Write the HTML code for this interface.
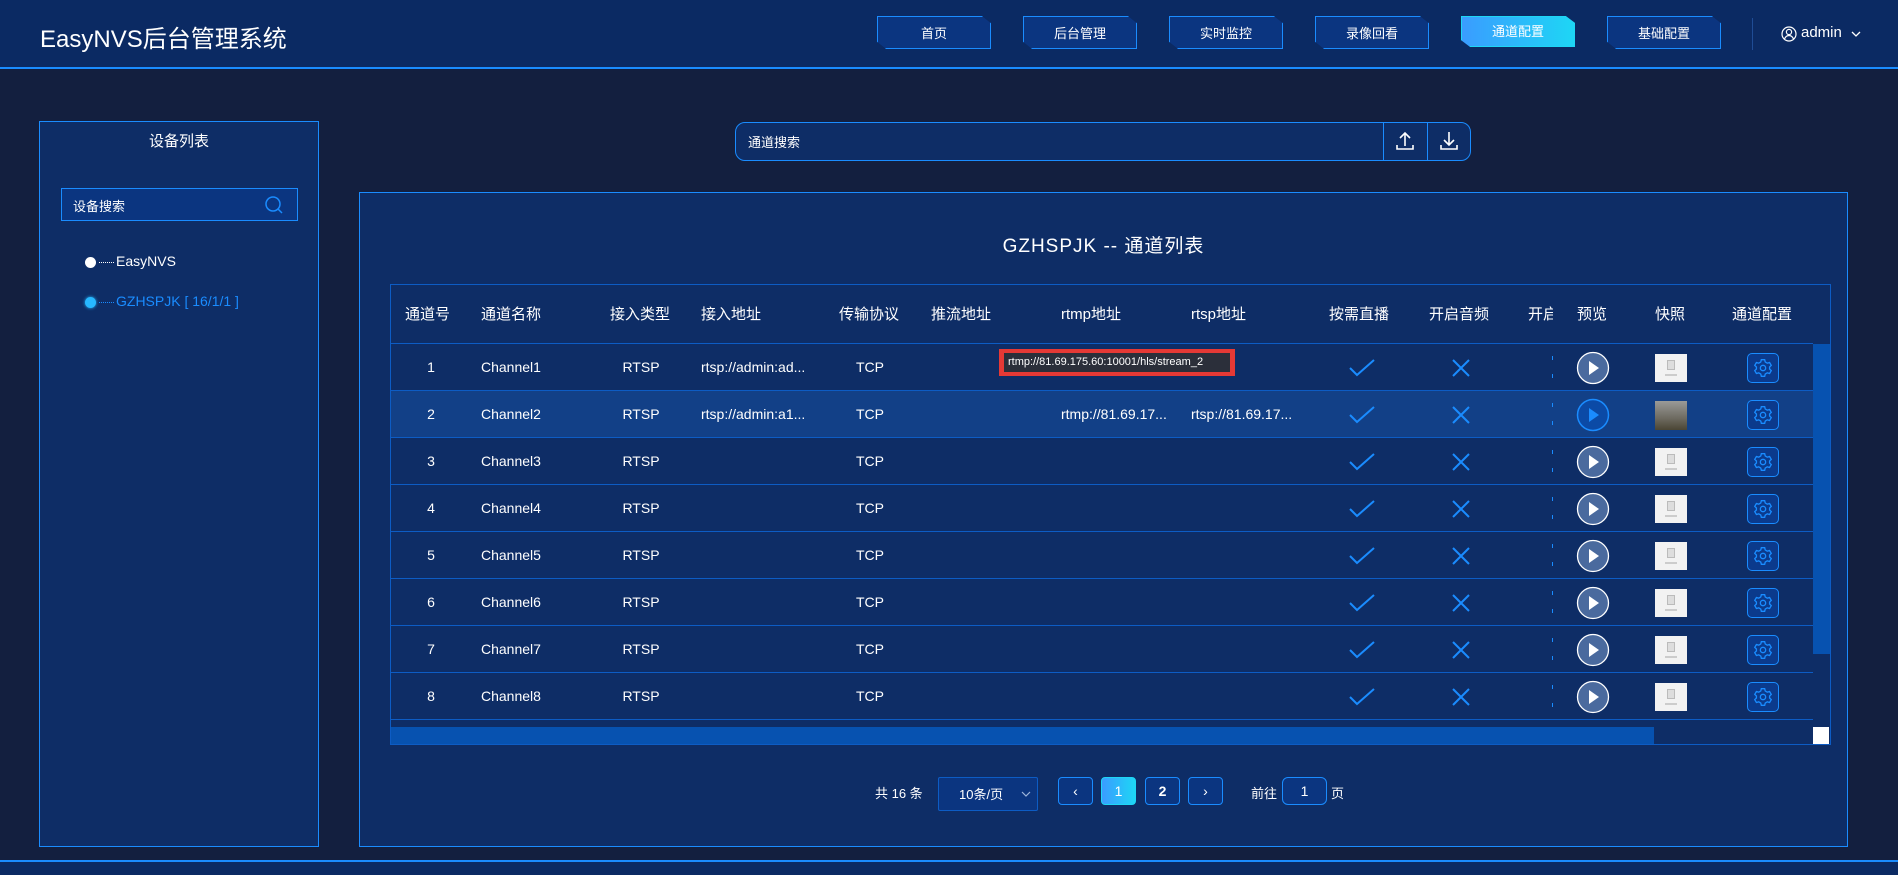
<!DOCTYPE html>
<html><head><meta charset="utf-8">
<style>
*{margin:0;padding:0;box-sizing:border-box}
body{width:1898px;height:875px;background:#131f3f;font-family:"Liberation Sans","Noto Sans CJK SC",sans-serif;color:#fff;position:relative;overflow:hidden;font-size:14px}
.abs{position:absolute}
.hdr{left:0;top:0;width:1898px;height:69px;background:#0b2a63;border-bottom:2px solid #1a8cff}
.title{left:40px;top:19px;font-size:24px;color:#fff}
.nav{top:16px;width:114px;height:33px;border:1px solid #1a8cff;background:#0b3580;font-size:13px;text-align:center;line-height:33px;clip-path:polygon(0 0,92% 0,100% 22%,100% 100%,8% 100%,0 78%)}
.nav.on{background:linear-gradient(90deg,#3a9cff,#1ed6f5);border-color:#1ed6f5;height:31px;line-height:30px}
.panel{background:#0e2d66;border:1px solid #1a8cff}
.cell{position:absolute;text-align:center;font-size:14px;line-height:47px}
.hd{position:absolute;font-size:15px;line-height:20px}
.row{position:absolute;left:391px;width:1422px;height:47px;border-bottom:1px solid #0d5cc4}
.pb{position:absolute;border:1px solid #1a8cff;background:#0b3580;border-radius:4px;text-align:center;font-size:14px}
</style></head><body>
<div class="abs hdr"></div>
<div class="abs title">EasyNVS后台管理系统</div>
<div class="abs nav" style="left:877px">首页</div>
<div class="abs nav" style="left:1023px">后台管理</div>
<div class="abs nav" style="left:1169px">实时监控</div>
<div class="abs nav" style="left:1315px">录像回看</div>
<div class="abs nav on" style="left:1461px">通道配置</div>
<div class="abs nav" style="left:1607px">基础配置</div>
<div class="abs" style="left:1752px;top:18px;width:1px;height:32px;background:#1f4c95"></div>
<svg class="abs" style="left:1781px;top:26px" width="16" height="16" viewBox="0 0 16 16" fill="none" stroke="#fff" stroke-width="1.2"><circle cx="8" cy="8" r="7"/><circle cx="8" cy="6" r="2.6"/><path d="M3.5 13c1-2.5 2.7-3.5 4.5-3.5s3.5 1 4.5 3.5"/></svg>
<div class="abs" style="left:1801px;top:24px;font-size:15px">admin</div>
<svg class="abs" style="left:1851px;top:30px" width="10" height="8" viewBox="0 0 10 8" fill="none" stroke="#fff" stroke-width="1.3"><path d="M1 2l4 4 4-4"/></svg>

<div class="abs panel" style="left:39px;top:121px;width:280px;height:726px"></div>
<div class="abs" style="left:39px;top:130px;width:280px;text-align:center;font-size:15px">设备列表</div>
<div class="abs" style="left:61px;top:188px;width:237px;height:33px;border:1px solid #1a8cff;background:#0b3580"></div>
<div class="abs" style="left:73px;top:196px;font-size:13px">设备搜索</div>
<svg class="abs" style="left:264px;top:195px" width="20" height="20" viewBox="0 0 20 20" fill="none" stroke="#1a8cff" stroke-width="1.5"><circle cx="9" cy="9" r="7"/><path d="M14 14l4 4"/></svg>
<div class="abs" style="left:85px;top:257px;width:11px;height:11px;border-radius:50%;background:#fff"></div>
<div class="abs" style="left:99px;top:262px;width:15px;border-top:1px dotted #fff"></div>
<div class="abs" style="left:116px;top:253px;font-size:14px">EasyNVS</div>
<div class="abs" style="left:85px;top:297px;width:11px;height:11px;border-radius:50%;background:#27b8ff;box-shadow:0 0 3px #27b8ff"></div>
<div class="abs" style="left:99px;top:302px;width:15px;border-top:1px dotted #1a8cff"></div>
<div class="abs" style="left:116px;top:293px;font-size:14px;color:#1a8cff">GZHSPJK [ 16/1/1 ]</div>

<div class="abs" style="left:735px;top:122px;width:736px;height:39px;border:1px solid #1a8cff;border-radius:10px;background:#0e2d66"></div>
<div class="abs" style="left:748px;top:132px;font-size:13px">通道搜索</div>
<div class="abs" style="left:1383px;top:122px;width:1px;height:39px;background:#1a8cff"></div>
<div class="abs" style="left:1427px;top:122px;width:1px;height:39px;background:#1a8cff"></div>
<svg class="abs" style="left:1395px;top:130px" width="20" height="22" viewBox="0 0 20 22" fill="none" stroke="#fff" stroke-width="1.6"><path d="M10 16V3M5 8l5-5 5 5M2 15v4h16v-4"/></svg>
<svg class="abs" style="left:1439px;top:130px" width="20" height="22" viewBox="0 0 20 22" fill="none" stroke="#fff" stroke-width="1.6"><path d="M10 2v13M5 10l5 5 5-5M2 15v4h16v-4"/></svg>

<div class="abs panel" style="left:359px;top:192px;width:1489px;height:655px"></div>
<div class="abs" style="left:359px;top:231px;width:1489px;text-align:center;font-size:19px;letter-spacing:1px">GZHSPJK -- 通道列表</div>
<div class="abs" style="left:390px;top:284px;width:1441px;height:461px;border:1px solid #0d5cc4"></div>
<div class="abs" style="left:391px;top:343px;width:1422px;height:1px;background:#0d5cc4"></div>
<div class="hd" style="left:405px;top:305px">通道号</div>
<div class="hd" style="left:481px;top:305px">通道名称</div>
<div class="hd" style="left:610px;top:305px">接入类型</div>
<div class="hd" style="left:701px;top:305px">接入地址</div>
<div class="hd" style="left:839px;top:305px">传输协议</div>
<div class="hd" style="left:931px;top:305px">推流地址</div>
<div class="hd" style="left:1061px;top:305px">rtmp地址</div>
<div class="hd" style="left:1191px;top:305px">rtsp地址</div>
<div class="hd" style="left:1329px;top:305px">按需直播</div>
<div class="hd" style="left:1429px;top:305px">开启音频</div>
<div class="hd" style="left:1528px;top:305px;width:25px;overflow:hidden;white-space:nowrap">开启</div>
<div class="hd" style="left:1577px;top:305px">预览</div>
<div class="hd" style="left:1655px;top:305px">快照</div>
<div class="hd" style="left:1732px;top:305px">通道配置</div>

<div id="rows"></div>
<script>
var h='';
for(var i=1;i<=8;i++){
var y=344+(i-1)*47;var hl=i==2;
h+='<div class="row" style="top:'+y+'px;'+(hl?'background:#124087':'')+'"></div>';
function c(x,w,t,al){h+='<div class="cell" style="left:'+x+'px;top:'+y+'px;width:'+w+'px;text-align:'+(al||'center')+'">'+t+'</div>';}
c(411,40,i);c(481,100,'Channel'+i,'left');c(610,62,'RTSP');
if(i<=2)c(701,120,i==1?'rtsp://admin:ad...':'rtsp://admin:a1...','left');
c(839,62,'TCP');
if(i==2){c(1061,120,'rtmp://81.69.17...','left');c(1191,120,'rtsp://81.69.17...','left');}
h+='<svg style="position:absolute;left:1349px;top:'+(y+14)+'px" width="26" height="20" viewBox="0 0 26 20" fill="none" stroke="#1a8cff" stroke-width="2"><path d="M1 10l7 7L25 2"/></svg>';
h+='<svg style="position:absolute;left:1451px;top:'+(y+14)+'px" width="20" height="20" viewBox="0 0 20 20" fill="none" stroke="#1a8cff" stroke-width="2"><path d="M2 2l16 16M18 2L2 18"/></svg>';
h+='<div style="position:absolute;left:1552px;top:'+(y+12)+'px;width:1px;height:4px;background:#1a8cff"></div><div style="position:absolute;left:1552px;top:'+(y+30)+'px;width:1px;height:4px;background:#1a8cff"></div>';
h+='<svg style="position:absolute;left:1576px;top:'+(y+7)+'px" width="34" height="34" viewBox="0 0 34 34">'+(hl?'<circle cx="17" cy="17" r="15.5" fill="#0b4aa6" stroke="#1a8cff" stroke-width="1.5"/><path d="M13 10l10 7-10 7z" fill="#1a8cff"/>':'<circle cx="17" cy="17" r="15.5" fill="#4a6a9e" stroke="#fff" stroke-width="1.3"/><path d="M13 10l10 7-10 7z" fill="#fff"/>')+'</svg>';
if(hl)h+='<div style="position:absolute;left:1655px;top:'+(y+10)+'px;width:32px;height:29px;background:linear-gradient(#9a9a98,#6d6a60 60%,#4a4534)"></div>';
else h+='<div style="position:absolute;left:1655px;top:'+(y+10)+'px;width:32px;height:28px;background:#f2f2f2"><div style="position:absolute;left:12px;top:6px;width:8px;height:10px;border:1px solid #bbb;background:#ddd"></div><div style="position:absolute;left:10px;top:20px;width:12px;height:2px;background:#ccc"></div></div>';
h+='<div style="position:absolute;left:1747px;top:'+(y+9)+'px;width:32px;height:30px;border:1px solid #1a8cff;border-radius:5px;background:#0b3a8c"></div>';
h+='<svg style="position:absolute;left:1753px;top:'+(y+14)+'px" width="20" height="20" viewBox="0 0 24 24" fill="none" stroke="#1a8cff" stroke-width="1.6"><circle cx="12" cy="12" r="3.2"/><path d="M10 2h4l.7 2.8 2.4 1.4 2.8-.8 2 3.4-2 2v2.4l2 2-2 3.4-2.8-.8-2.4 1.4L14 22h-4l-.7-2.8-2.4-1.4-2.8.8-2-3.4 2-2v-2.4l-2-2 2-3.4 2.8.8 2.4-1.4z"/></svg>';
}
document.getElementById('rows').innerHTML=h;
</script>
<div class="abs" style="left:1813px;top:344px;width:17px;height:310px;background:#0752b0"></div>
<div class="abs" style="left:391px;top:727px;width:1263px;height:17px;background:#0752b0"></div>
<div class="abs" style="left:1813px;top:727px;width:16px;height:17px;background:#fff"></div>

<div class="abs" style="left:999px;top:349px;width:236px;height:27px;background:#e53935"></div>
<div class="abs" style="left:1004px;top:353px;width:226px;height:19px;background:#2b2f3a;font-size:11px;line-height:19px;padding-left:4px">rtmp://81.69.175.60:10001/hls/stream_2</div>

<div class="abs" style="left:875px;top:783px;font-size:13px">共 16 条</div>
<div class="pb" style="left:938px;top:777px;width:100px;height:34px;line-height:34px;border-color:#0d5cc4;border-radius:2px;font-size:13px;text-align:left;padding-left:20px">10条/页</div>
<svg class="abs" style="left:1021px;top:790px" width="10" height="8" viewBox="0 0 10 8" fill="none" stroke="#9fb6db" stroke-width="1.2"><path d="M1 2l4 4 4-4"/></svg>
<div class="pb" style="left:1058px;top:777px;width:35px;height:28px;line-height:26px">‹</div>
<div class="pb" style="left:1101px;top:777px;width:35px;height:28px;line-height:26px;background:linear-gradient(90deg,#3a9cff,#1ed6f5);border-color:#1ed6f5">1</div>
<div class="pb" style="left:1145px;top:777px;width:35px;height:28px;line-height:26px;font-weight:bold">2</div>
<div class="pb" style="left:1188px;top:777px;width:35px;height:28px;line-height:26px">›</div>
<div class="abs" style="left:1251px;top:783px;font-size:13px">前往</div>
<div class="pb" style="left:1282px;top:777px;width:45px;height:28px;line-height:26px;border-radius:6px">1</div>
<div class="abs" style="left:1331px;top:783px;font-size:13px">页</div>

<div class="abs" style="left:0;top:860px;width:1898px;height:15px;background:#0b2a63;border-top:2px solid #1a8cff"></div>
</body></html>
